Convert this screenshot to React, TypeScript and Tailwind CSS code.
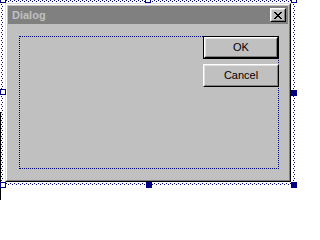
import React from "react"

// classic win95 caption "x" glyph, 8x7 pixels
const CloseGlyph = () => (
  <svg width="8" height="7" viewBox="0 0 8 7" shapeRendering="crispEdges" fill="#000">
    <rect x="0" y="0" width="2" height="1" />
    <rect x="6" y="0" width="2" height="1" />
    <rect x="1" y="1" width="2" height="1" />
    <rect x="5" y="1" width="2" height="1" />
    <rect x="2" y="2" width="4" height="1" />
    <rect x="3" y="3" width="2" height="1" />
    <rect x="2" y="4" width="4" height="1" />
    <rect x="1" y="5" width="2" height="1" />
    <rect x="5" y="5" width="2" height="1" />
    <rect x="0" y="6" width="2" height="1" />
    <rect x="6" y="6" width="2" height="1" />
  </svg>
)

const CloseButton = () => (
  <div className="w-[16px] h-[14px] border border-t-white border-l-white border-r-black border-b-black">
    <div className="h-full border border-t-[#dfdfdf] border-l-[#dfdfdf] border-r-[#808080] border-b-[#808080] bg-[#c0c0c0] flex items-center justify-center">
      <CloseGlyph />
    </div>
  </div>
)

const PushButton = ({ label, isDefault }: { label: string; isDefault?: boolean }) => {
  const face = (
    <div className="h-full border border-t-white border-l-white border-r-black border-b-black">
      <div className="h-full border border-t-[#dfdfdf] border-l-[#dfdfdf] border-r-[#808080] border-b-[#808080] bg-[#c0c0c0] flex items-center justify-center text-[11px] leading-none text-black">
        {label}
      </div>
    </div>
  )

  if (isDefault) {
    return <div className="w-[76px] h-[23px] border border-black">{face}</div>
  }
  return <div className="w-[76px] h-[23px]">{face}</div>
}

export default function App() {
  return (
    <div className="relative w-[318px] h-[200px] overflow-hidden bg-white font-['Liberation_Sans',Arial,sans-serif]">
      {/* dialog being edited */}
      <div className="pl-[5px] pt-[3px]">
        <div className="w-[286px] h-[179px] border border-t-[#dfdfdf] border-l-[#dfdfdf] border-r-black border-b-black">
          <div className="h-full border border-t-white border-l-white border-r-[#808080] border-b-[#808080] bg-[#c0c0c0] p-[1px] flex flex-col">
            <div className="h-[18px] bg-[#808080] flex items-center justify-between pl-[4px] pr-[2px]">
              <span className="text-[11px] font-bold leading-none text-[#c0c0c0]">Dialog</span>
              <CloseButton />
            </div>
            <div className="flex-1 pl-[11px] pt-[12px]">
              <div className="w-[260px] h-[133px] border border-dotted border-[#000080] flex justify-end">
                <div className="-mt-[1px] -mr-[1px] flex flex-col gap-[5px]">
                  <PushButton label="OK" isDefault />
                  <PushButton label="Cancel" />
                </div>
              </div>
            </div>
          </div>
        </div>
      </div>

      {/* edge of the window behind */}
      <div className="absolute left-0 top-[112px] w-[1px] h-[88px] bg-black" />

      {/* selection frame */}
      <div className="absolute left-[2px] top-0 w-[293px] flex flex-col">
        <div className="h-[1px] bg-[repeating-linear-gradient(90deg,#000080_0_1px,transparent_1px_4px)]" />
        <div className="h-[1px] bg-[repeating-linear-gradient(90deg,transparent_0_2px,#000080_2px_3px,transparent_3px_4px)]" />
      </div>
      <div className="absolute left-[2px] top-[183px] w-[293px] flex flex-col">
        <div className="h-[1px] bg-[repeating-linear-gradient(90deg,#000080_0_1px,transparent_1px_4px)]" />
        <div className="h-[1px] bg-[repeating-linear-gradient(90deg,transparent_0_2px,#000080_2px_3px,transparent_3px_4px)]" />
      </div>
      <div className="absolute left-[1px] top-0 h-[185px] flex">
        <div className="w-[1px] bg-[repeating-linear-gradient(180deg,#000080_0_1px,transparent_1px_4px)]" />
        <div className="w-[1px] bg-[repeating-linear-gradient(180deg,transparent_0_2px,#000080_2px_3px,transparent_3px_4px)]" />
      </div>
      <div className="absolute left-[293px] top-0 h-[185px] flex">
        <div className="w-[1px] bg-[repeating-linear-gradient(180deg,#000080_0_1px,transparent_1px_4px)]" />
        <div className="w-[1px] bg-[repeating-linear-gradient(180deg,transparent_0_2px,#000080_2px_3px,transparent_3px_4px)]" />
      </div>

      {/* sizing handles */}
      <div className="absolute left-0 top-[-3px] w-[6px] h-[6px] border border-[#000080] bg-white" />
      <div className="absolute left-[145px] top-[-3px] w-[6px] h-[6px] border border-[#000080] bg-white" />
      <div className="absolute left-[291px] top-[-3px] w-[6px] h-[6px] border border-[#000080] bg-white" />
      <div className="absolute left-0 top-[89px] w-[6px] h-[6px] border border-[#000080] bg-white" />
      <div className="absolute left-[291px] top-[90px] w-[6px] h-[6px] bg-[#000080]" />
      <div className="absolute left-0 top-[182px] w-[6px] h-[6px] border border-[#000080] bg-white" />
      <div className="absolute left-[146px] top-[182px] w-[6px] h-[6px] bg-[#000080]" />
      <div className="absolute left-[291px] top-[182px] w-[6px] h-[6px] bg-[#000080]" />
    </div>
  )
}
